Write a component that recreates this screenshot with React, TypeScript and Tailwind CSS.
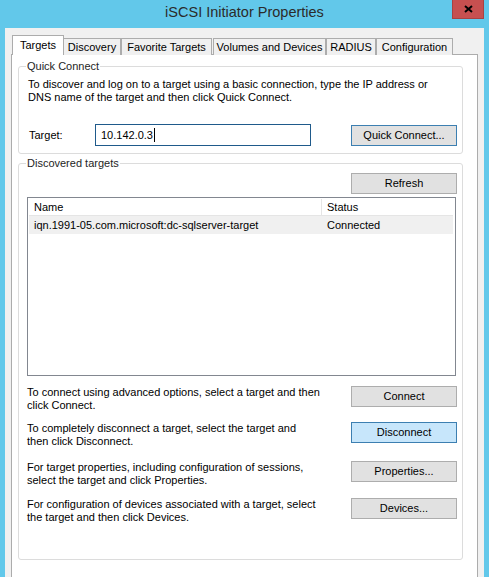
const font = "font-['Liberation_Sans',Arial,sans-serif]";

const tabs = [
  { label: "Discovery", cls: "w-[58px] -ml-px" },
  { label: "Favorite Targets", cls: "w-[91px]" },
  { label: "Volumes and Devices", cls: "w-[113px] ml-[1px]" },
  { label: "RADIUS", cls: "w-[50px]" },
  { label: "Configuration", cls: "w-[77px]" },
];

const WinButton = ({
  children,
  variant = "normal",
  className = "",
}: {
  children: React.ReactNode;
  variant?: "normal" | "default" | "pressed";
  className?: string;
}) => {
  const look =
    variant === "pressed"
      ? "bg-[#c7e6fb] border-[#3c7fb1]"
      : variant === "default"
        ? "bg-[#e1e1e1] border-[#3c7fb1]"
        : "bg-[#e1e1e1] border-[#adadad]";
  return (
    <button
      className={`w-[106px] h-[21px] shrink-0 border text-[11px] leading-[13px] text-black flex items-center justify-center ${look} ${className}`}
    >
      {children}
    </button>
  );
};

const GroupBox = ({
  title,
  className = "",
  children,
}: {
  title: string;
  className?: string;
  children: React.ReactNode;
}) => (
  <div
    className={`relative border border-[#dcdcdc] rounded-[3px] ${className}`}
  >
    <span className="absolute -top-[7px] left-[7px] bg-white px-[1px] leading-[13px] text-[#1e1e1e]">
      {title}
    </span>
    {children}
  </div>
);

const ActionRow = ({
  lines,
  button,
  variant,
  className = "",
}: {
  lines: [string, string];
  button: string;
  variant?: "normal" | "pressed";
  className?: string;
}) => (
  <div className={`flex justify-between ${className}`}>
    <p className="leading-[13px] text-black">
      {lines[0]}
      <br />
      {lines[1]}
    </p>
    <WinButton variant={variant}>{button}</WinButton>
  </div>
);

export default function App() {
  return (
    <div
      className={`w-[489px] h-[577px] bg-[#62c8ea] flex flex-col overflow-hidden text-[11px] ${font}`}
    >
      {/* title bar */}
      <div className="relative h-[28px] shrink-0 flex items-center justify-center">
        <span className="text-[14.5px] text-[#2b2b2b] -mt-[2px]">
          iSCSI Initiator Properties
        </span>
        <div className="absolute right-[5px] top-0 w-[32px] h-[19px] bg-[#c75050] border border-t-0 border-[#a84242] flex items-center justify-center">
          <svg width="9" height="8" viewBox="0 0 9 8">
            <path d="M1 1 L8 7 M8 1 L1 7" stroke="#000" strokeWidth="2" />
          </svg>
        </div>
      </div>

      {/* dialog body */}
      <div className="shrink-0 mx-[5px] bg-[#f0f0f0] px-[6px] pt-[7px] flex flex-col">
        {/* tabs */}
        <div className="flex items-end h-[20px] pl-[1px] relative z-10">
          <div className="w-[52px] h-[20px] bg-white border border-b-0 border-[#acacac] flex items-center justify-center text-black pb-[1px]">
            Targets
          </div>
          {tabs.map((t) => (
            <div
              key={t.label}
              className={`${t.cls} h-[17px] border border-b-0 border-[#acacac] bg-[#f0f0f0] flex items-center justify-center text-black`}
            >
              {t.label}
            </div>
          ))}
        </div>

        {/* tab page */}
        <div className="h-[560px] -mt-px bg-white border border-[#acacac] pl-[6px] pr-[14px] pt-[11px]">
          <GroupBox title="Quick Connect" className="h-[88px] pt-[11px] pl-[9px] pr-[5px]">
            <p className="leading-[13px] text-black">
              To discover and log on to a target using a basic connection, type the IP address or
              <br />
              DNS name of the target and then click Quick Connect.
            </p>
            <div className="flex items-center mt-[20px]">
              <span className="w-[67px] pl-[1px] text-black">Target:</span>
              <div className="w-[216px] h-[22px] border border-[#1f5a8b] flex items-center pl-[5px] text-black">
                10.142.0.3
                <span className="w-px h-[14px] bg-black ml-[1px]" />
              </div>
              <WinButton variant="default" className="ml-auto">
                Quick Connect...
              </WinButton>
            </div>
          </GroupBox>

          <GroupBox
            title="Discovered targets"
            className="mt-[9px] h-[397px] pt-[9px] pl-[8px] pr-[5px]"
          >
            <div className="flex justify-end">
              <WinButton className="h-[20px]">Refresh</WinButton>
            </div>
            {/* list view */}
            <div className="mt-[3px] w-[429px] h-[179px] border border-[#828790] pt-[1px] pl-[1px] pr-[2px]">
              <div className="flex h-[17px] border-b border-[#e5e5e5] text-black">
                <div className="w-[293px] border-r border-[#e5e5e5] pl-[5px] flex items-center">
                  Name
                </div>
                <div className="flex-1 pl-[5px] flex items-center">Status</div>
              </div>
              <div className="flex h-[18px] bg-[#f0f0f0] text-black">
                <div className="w-[293px] pl-[5px] flex items-center">
                  iqn.1991-05.com.microsoft:dc-sqlserver-target
                </div>
                <div className="flex-1 pl-[5px] flex items-center">Connected</div>
              </div>
            </div>

            <ActionRow
              className="mt-[10px]"
              lines={[
                "To connect using advanced options, select a target and then",
                "click Connect.",
              ]}
              button="Connect"
            />
            <ActionRow
              className="mt-[10px]"
              lines={[
                "To completely disconnect a target, select the target and",
                "then click Disconnect.",
              ]}
              button="Disconnect"
              variant="pressed"
            />
            <ActionRow
              className="mt-[13px]"
              lines={[
                "For target properties, including configuration of sessions,",
                "select the target and click Properties.",
              ]}
              button="Properties..."
            />
            <ActionRow
              className="mt-[11px]"
              lines={[
                "For configuration of devices associated with a target, select",
                "the target and then click Devices.",
              ]}
              button="Devices..."
            />
          </GroupBox>
        </div>
      </div>
    </div>
  );
}
